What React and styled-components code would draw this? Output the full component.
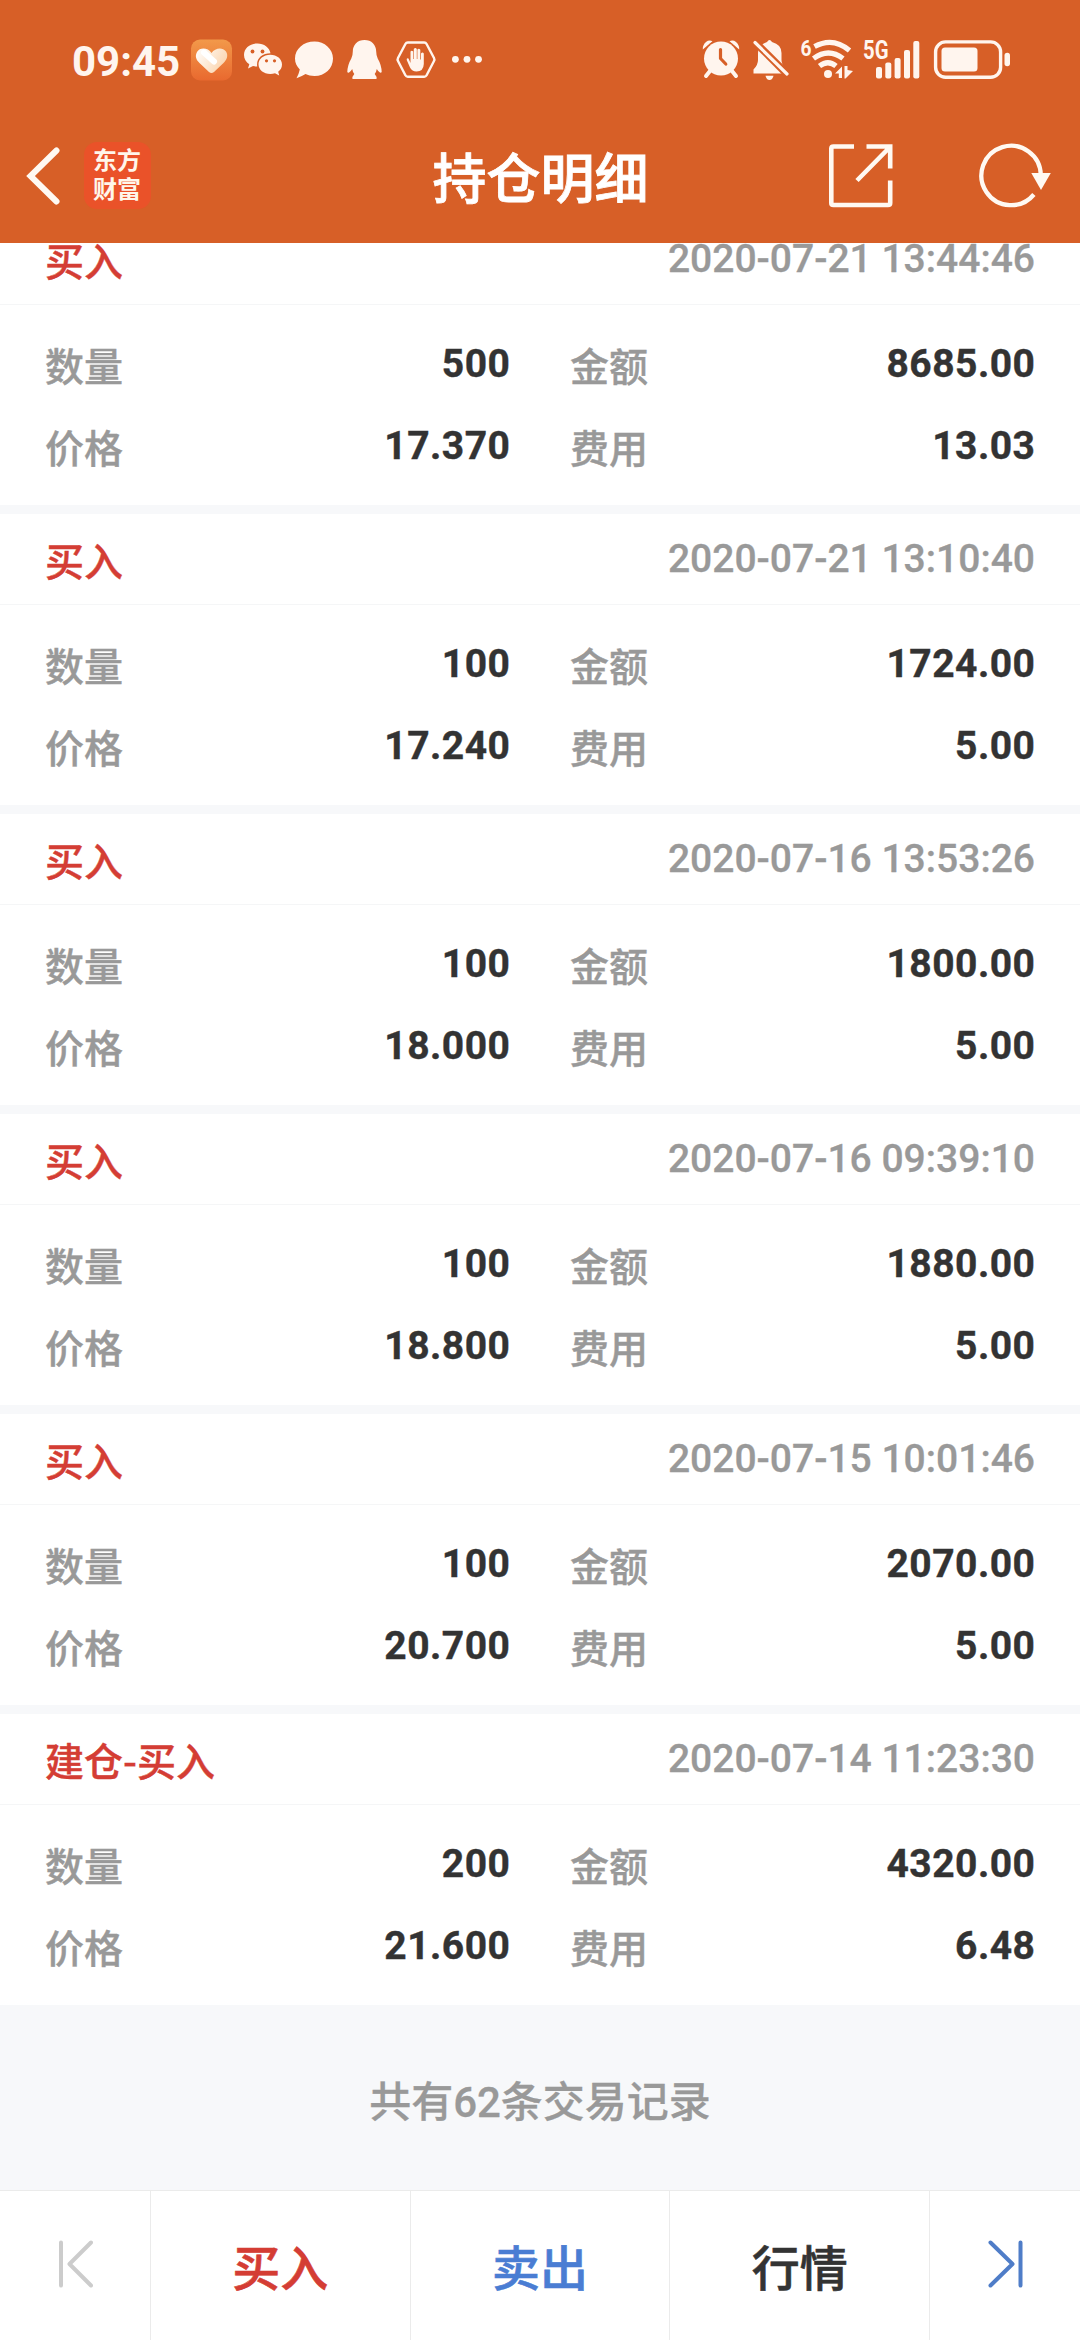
import React from 'react';
import styled, { createGlobalStyle } from 'styled-components';

const ORANGE = '#d75f27';
const CREAM = '#fff5ee';
const RED = '#d43d34';
const BLUE = '#4a7dd3';
const LATIN = "Roboto, 'Noto Sans CJK SC', sans-serif";
const HAN = "'Noto Sans CJK SC', Roboto, sans-serif";

const GlobalStyle = createGlobalStyle`
  * { box-sizing: border-box; }
  body { margin: 0; background: #f7f8fa; }
`;

const Screen = styled.div`
  width: 1080px;
  height: 2340px;
  display: flex;
  flex-direction: column;
  overflow: hidden;
  background: #f7f8fa;
  font-family: ${LATIN};
  color: #333;
`;

const TopBar = styled.header`
  height: 243px;
  flex: none;
  background: ${ORANGE};
  color: #fff;
`;

const StatusBar = styled.div`
  height: 108px;
  padding: 12px 70px 0 72px;
  display: flex;
  align-items: flex-start;
  justify-content: space-between;
`;

const StatusGroup = styled.div`
  display: flex;
  align-items: center;
  height: 98px;
  margin-top: -1px;
`;

const Clock = styled.span`
  width: 119px;
  padding-top: 3px;
  font-size: 42px;
  line-height: 95px;
  font-weight: 700;
  color: ${CREAM};
`;

const Glyph = styled.svg`
  display: block;
  flex: none;
  width: ${(p) => p.$w}px;
  height: 44px;
  margin-left: ${(p) => p.$gap || 0}px;
  fill: ${CREAM};
  overflow: visible;
`;

const NavBar = styled.nav`
  height: 135px;
  padding: 0 27px 0 26px;
  display: grid;
  grid-template-columns: 1fr auto 1fr;
  align-items: center;
`;

const NavSide = styled.div`
  display: flex;
  align-items: center;
  justify-content: ${(p) => (p.$end ? 'flex-end' : 'flex-start')};
  gap: ${(p) => p.$gap}px;
`;

const NavIcon = styled.svg`
  display: block;
  width: ${(p) => p.$w}px;
  height: 68px;
  fill: none;
  stroke: #fff9f2;
  stroke-width: ${(p) => p.$stroke || 4.6};
`;

const Logo = styled.div`
  width: 67px;
  height: 67px;
  padding: 0 1px 5px 0;
  display: flex;
  flex-direction: column;
  align-items: center;
  justify-content: center;
  border-radius: 13px;
  background: #ea5229;
`;

const LogoLine = styled.span`
  font-family: ${HAN};
  font-size: 24px;
  line-height: 29px;
  font-weight: 700;
  color: #fff6ea;
`;

const Title = styled.h1`
  margin: 0;
  padding-left: 2px;
  font-family: ${HAN};
  font-size: 54px;
  line-height: 80px;
  font-weight: 500;
  -webkit-text-stroke: 0.8px currentColor;
  color: #fff;
`;

const Viewport = styled.main`
  flex: 1;
  min-height: 0;
  overflow: hidden;
`;

const TradeList = styled.div`
  margin-top: -29px;
  display: flex;
  flex-direction: column;
  gap: 9px;
`;

const Card = styled.section`
  height: 291px;
  background: #fff;
`;

const CardHead = styled.div`
  height: 91px;
  padding: 0 45px;
  display: flex;
  justify-content: space-between;
  border-bottom: 1px solid #f5f6f7;
  line-height: 90px;
`;

const Side = styled.span`
  font-family: ${HAN};
  font-size: 39px;
  font-weight: 500;
  -webkit-text-stroke: 0.4px currentColor;
  color: ${RED};
`;

const Time = styled.time`
  font-size: 39px;
  font-weight: 500;
  color: #999;
  -webkit-text-stroke: 0.3px currentColor;
`;

const Fields = styled.div`
  padding: 18px 45px 0;
  display: grid;
  grid-template-columns: 1fr 1fr;
  column-gap: 60px;
`;

const Field = styled.div`
  display: flex;
  justify-content: space-between;
  line-height: 82px;
  font-size: 39px;
`;

const Label = styled.span`
  font-family: ${HAN};
  font-weight: 500;
  -webkit-text-stroke: 0.4px currentColor;
  color: #999;
`;

const Value = styled.span`
  font-weight: 700;
  letter-spacing: 0.5px;
  margin-right: -0.5px;
  -webkit-text-stroke: 0.4px currentColor;
`;

const Summary = styled.p`
  margin: 0;
  padding-top: 68px;
  text-align: center;
  font-size: 42px;
  line-height: 60px;
  font-weight: 500;
  -webkit-text-stroke: 0.3px currentColor;
  color: #999;
`;

const TabBar = styled.footer`
  height: 150px;
  flex: none;
  display: flex;
  border-top: 1px solid #ebebeb;
  background: #fff;
`;

const Tab = styled.div`
  flex: ${(p) => (p.$width ? `0 0 ${p.$width}px` : '1 1 0')};
  padding-bottom: 2px;
  display: flex;
  align-items: center;
  justify-content: center;
  border-right: 1px solid #ebebeb;
  font-family: ${HAN};
  font-size: 48px;
  font-weight: 500;
  -webkit-text-stroke: 0.6px currentColor;
  color: ${(p) => p.$color};
  &:last-child { border-right: 0; }
`;

const StepIcon = styled.svg`
  width: 36px;
  height: 50px;
  margin-bottom: 1px;
  fill: none;
  stroke: currentColor;
  stroke-width: 4;
  stroke-linecap: round;
  stroke-linejoin: round;
`;

const trades = [
  { side: '买入', time: '2020-07-21 13:44:46', qty: '500', amount: '8685.00', price: '17.370', fee: '13.03' },
  { side: '买入', time: '2020-07-21 13:10:40', qty: '100', amount: '1724.00', price: '17.240', fee: '5.00' },
  { side: '买入', time: '2020-07-16 13:53:26', qty: '100', amount: '1800.00', price: '18.000', fee: '5.00' },
  { side: '买入', time: '2020-07-16 09:39:10', qty: '100', amount: '1880.00', price: '18.800', fee: '5.00' },
  { side: '买入', time: '2020-07-15 10:01:46', qty: '100', amount: '2070.00', price: '20.700', fee: '5.00' },
  { side: '建仓-买入', time: '2020-07-14 11:23:30', qty: '200', amount: '4320.00', price: '21.600', fee: '6.48' },
];

function NoticeIcons() {
  return (
    <>
      <Glyph $w={41} viewBox="0 0 41 44">
        <defs>
          <linearGradient id="tile" x1="0" y1="0" x2="0" y2="1">
            <stop offset="0" stopColor="#f2994a" />
            <stop offset="1" stopColor="#e9692f" />
          </linearGradient>
          <linearGradient id="heart" x1="0" y1="0" x2="1" y2="0.5">
            <stop offset="0" stopColor="#fff" />
            <stop offset="1" stopColor="#fbd6b0" />
          </linearGradient>
        </defs>
        <rect y="1.5" width="41" height="41" rx="9" fill="url(#tile)" />
        <path d="M20.500 15C17 9.500 9 9 6 14C3.500 18.500 5.500 22 8.500 25L18 34Q20.500 36 23 34L32.500 25C36 21.500 37.500 17.500 35 13.500C31.500 8.800 24 10 20.500 15Z" fill="url(#heart)" />
        <path d="M13 14.500L23 23.500" stroke="#fff" strokeWidth="6" strokeLinecap="round" />
      </Glyph>
      <Glyph $w={38} $gap={12} viewBox="0 0 38 44">
        <path d="M13.500 5.500C6 5.500 0 10.300 0 17C0 21 2 24 5.300 26.200L4 30.500L9 28C10.500 28.300 12 28.500 13.200 28.400C12 20.500 18 15.300 26.500 15.200C25.500 9.500 20 5.500 13.500 5.500Z" />
        <path d="M26.300 16.700C19.500 16.700 14.500 21 14.500 26.300C14.500 31.800 19.500 36 26.300 36C28 36 29.500 35.700 31 35.200L35.200 37.500L34.200 33.700C36.500 32 38 29.400 38 26.400C38 21 33 16.700 26.300 16.700Z" />
        <g fill={ORANGE}>
          <circle cx="8.500" cy="13.500" r="1.900" /><circle cx="18.500" cy="13.500" r="1.900" />
          <circle cx="22.500" cy="22.800" r="1.600" /><circle cx="30.500" cy="22.800" r="1.600" />
        </g>
      </Glyph>
      <Glyph $w={38} $gap={12.500} viewBox="0 0 38 44">
        <path d="M19.500 3.500C29.500 3.500 38 11 38 20.500C38 30.500 30 38 19.500 38C16 38 13 37.300 10.500 36Q6.500 38.500 1.500 40.300Q4 35.500 4.800 31.500C1.800 28.300 0 25 0 20.500C0 11 8.500 3.500 19.500 3.500Z" />
      </Glyph>
      <Glyph $w={35} $gap={14.500} viewBox="0 0 35 44">
        <path d="M17.500 2C10.500 2 5.800 6.800 5.800 13.500Q5.800 17.500 4.300 20.500Q0.500 27 0.300 34Q1.500 36.500 5.200 31Q5.800 34.300 7.300 36Q5 38.500 5.500 41H29.500Q30 38.500 27.700 36Q29.200 34.300 29.800 31Q33.500 36.500 34.700 34Q34.500 27 30.700 20.500Q29.200 17.500 29.200 13.500C29.200 6.800 24.500 2 17.500 2Z" />
      </Glyph>
      <Glyph $w={40} $gap={13.500} viewBox="0 0 40 44">
        <path d="M11.800 4.500H28.200Q29.800 4.500 30.600 6L38 20Q38.800 21.500 38 23L30.600 37.200Q29.800 38.700 28.200 38.700H11.800Q10.200 38.700 9.400 37.200L2 23Q1.200 21.500 2 20L9.400 6Q10.200 4.500 11.800 4.500Z" fill="none" stroke={CREAM} strokeWidth="2.400" />
        <path d="M14.500 25V13.500Q15.800 11.800 17.200 13.500V21H17.800V11Q19.300 9.200 20.800 11V21H21.400V11.500Q23 10 24.300 11.800V21.500H25V15.500Q26.500 13.500 27.800 15.500V26Q27.500 33.500 20.500 33.500Q16 33.500 14 29.500L10.700 22Q10.500 19.500 12.500 20.500Z" />
      </Glyph>
      <Glyph $w={30} $gap={16} viewBox="0 0 30 44">
        <circle cx="3.400" cy="21.300" r="3.400" /><circle cx="15" cy="21.300" r="3.400" /><circle cx="26.500" cy="21.300" r="3.400" />
      </Glyph>
    </>
  );
}

function SystemIcons() {
  return (
    <>
      <Glyph $w={38} viewBox="0 0 38 44">
        <path d="M0.800 11.500Q0.500 7 4 4Q7 1.500 10.500 3.200ZM37.200 11.500Q37.500 7 34 4Q31 1.500 27.500 3.200Z" />
        <circle cx="19" cy="20.500" r="18.500" fill={ORANGE} />
        <path d="M8 33L4 38M30 33L34 38" stroke={CREAM} strokeWidth="4" strokeLinecap="round" />
        <circle cx="19" cy="20.500" r="17" />
        <path d="M18.500 11.500V20.500L23.800 26" fill="none" stroke={ORANGE} strokeWidth="3.200" strokeLinecap="round" strokeLinejoin="round" />
      </Glyph>
      <Glyph $w={36} $gap={13.500} viewBox="0 0 36 44">
        <path d="M14 4Q16.500 0 19 4Q28.500 6.500 28.500 15V22Q28.500 27 33 31.500V35.500H0.500V31.500Q5 27 5 22V15Q5 7 14 4Z" />
        <path d="M12.500 37.800H20.500Q19.500 42 16.500 42Q13.500 42 12.500 37.800Z" />
        <path d="M2 4L34 36" stroke={ORANGE} strokeWidth="7.500" />
        <path d="M2 4.500L34 36" stroke={CREAM} strokeWidth="3.200" strokeLinecap="round" />
      </Glyph>
      <Glyph $w={52} $gap={12} viewBox="0 0 52 44">
        <text x="-0.500" y="17.500" fontFamily="Roboto" fontSize="22.500" fontWeight="700" textLength="11" lengthAdjust="spacingAndGlyphs">6</text>
        <g fill="none" stroke={CREAM} strokeWidth="5.200">
          <path d="M13.500 8.500Q32 -1.500 48.500 12.500" />
          <path d="M12.500 20.500Q27.500 9.500 42 20.500" />
          <path d="M18.500 28Q27 21.500 35 28" />
        </g>
        <circle cx="27" cy="36" r="4" />
        <path d="M34 35.500L41 28.500V40H37.800V35.500ZM43.500 28H46.500V32L52 33L44.500 40.500H43.500Z" />
      </Glyph>
      <Glyph $w={57} $gap={10} viewBox="0 0 57 44">
        <text x="0" y="20.800" fontFamily="Roboto" fontSize="25" fontWeight="700" textLength="25.5" lengthAdjust="spacingAndGlyphs">5G</text>
        <rect x="13" y="29" width="6" height="11.500" rx="2" />
        <rect x="22.300" y="24.500" width="6" height="16" rx="2" />
        <rect x="31.600" y="20" width="6" height="20.500" rx="2" />
        <rect x="41" y="12" width="6" height="28.500" rx="2" />
        <rect x="50.300" y="3" width="6" height="37.500" rx="2" />
      </Glyph>
      <Glyph $w={76} $gap={14} viewBox="0 0 76 44">
        <rect x="1.600" y="3.900" width="65" height="35.400" rx="10" fill="none" stroke={CREAM} strokeWidth="3.400" />
        <rect x="7.500" y="9.500" width="36" height="24" rx="3.500" />
        <rect x="70.500" y="14.800" width="5.500" height="13.500" rx="2.700" />
      </Glyph>
    </>
  );
}

function TradeCard({ trade }) {
  const fields = [
    ['数量', trade.qty],
    ['金额', trade.amount],
    ['价格', trade.price],
    ['费用', trade.fee],
  ];
  return (
    <Card>
      <CardHead>
        <Side>{trade.side}</Side>
        <Time>{trade.time}</Time>
      </CardHead>
      <Fields>
        {fields.map(([label, value]) => (
          <Field key={label}>
            <Label>{label}</Label>
            <Value>{value}</Value>
          </Field>
        ))}
      </Fields>
    </Card>
  );
}

export default function App() {
  return (
    <Screen>
      <GlobalStyle />
      <TopBar>
        <StatusBar>
          <StatusGroup>
            <Clock>09:45</Clock>
            <NoticeIcons />
          </StatusGroup>
          <StatusGroup>
            <SystemIcons />
          </StatusGroup>
        </StatusBar>
        <NavBar>
          <NavSide $gap={24}>
            <NavIcon $w={34} $stroke={6} viewBox="0 0 34 68">
              <path d="M30.500 8.500L4.500 34L30.500 59.500" strokeLinecap="round" />
            </NavIcon>
            <Logo>
              <LogoLine>东方</LogoLine>
              <LogoLine>财富</LogoLine>
            </Logo>
          </NavSide>
          <Title>持仓明细</Title>
          <NavSide $end $gap={86}>
            <NavIcon $w={65} viewBox="0 0 65 68">
              <path d="M26 4.500H5.500Q3.300 4.500 3.300 6.500V61Q3.300 63 5.500 63H60Q62.200 63 62.200 61V38.500M38.500 4.500H62.200V26.500M29 38.500L61.500 5.500" />
            </NavIcon>
            <NavIcon $w={74} $stroke={4.300} viewBox="0 0 74 68">
              <path d="M54.900 52.500A29.700 29.700 0 1 1 61.800 33" />
              <path d="M52.300 31H71.800L62 48Z" fill="#fff9f2" stroke="none" />
            </NavIcon>
          </NavSide>
        </NavBar>
      </TopBar>
      <Viewport>
        <TradeList>
          {trades.map((trade) => (
            <TradeCard key={trade.time} trade={trade} />
          ))}
        </TradeList>
        <Summary>共有62条交易记录</Summary>
      </Viewport>
      <TabBar>
        <Tab $width={151} $color="#ccc">
          <StepIcon viewBox="0 0 36 50">
            <path d="M4 3.500V46.500M34 3.500L12.500 25L34 46.500" />
          </StepIcon>
        </Tab>
        <Tab $color={RED}>买入</Tab>
        <Tab $color={BLUE}>卖出</Tab>
        <Tab $color="#333">行情</Tab>
        <Tab $width={150} $color="#4f7dc8">
          <StepIcon viewBox="0 0 36 50">
            <path d="M33.500 3.500V46.500M3.500 3.500L25.500 25L3.500 46.500" />
          </StepIcon>
        </Tab>
      </TabBar>
    </Screen>
  );
}
